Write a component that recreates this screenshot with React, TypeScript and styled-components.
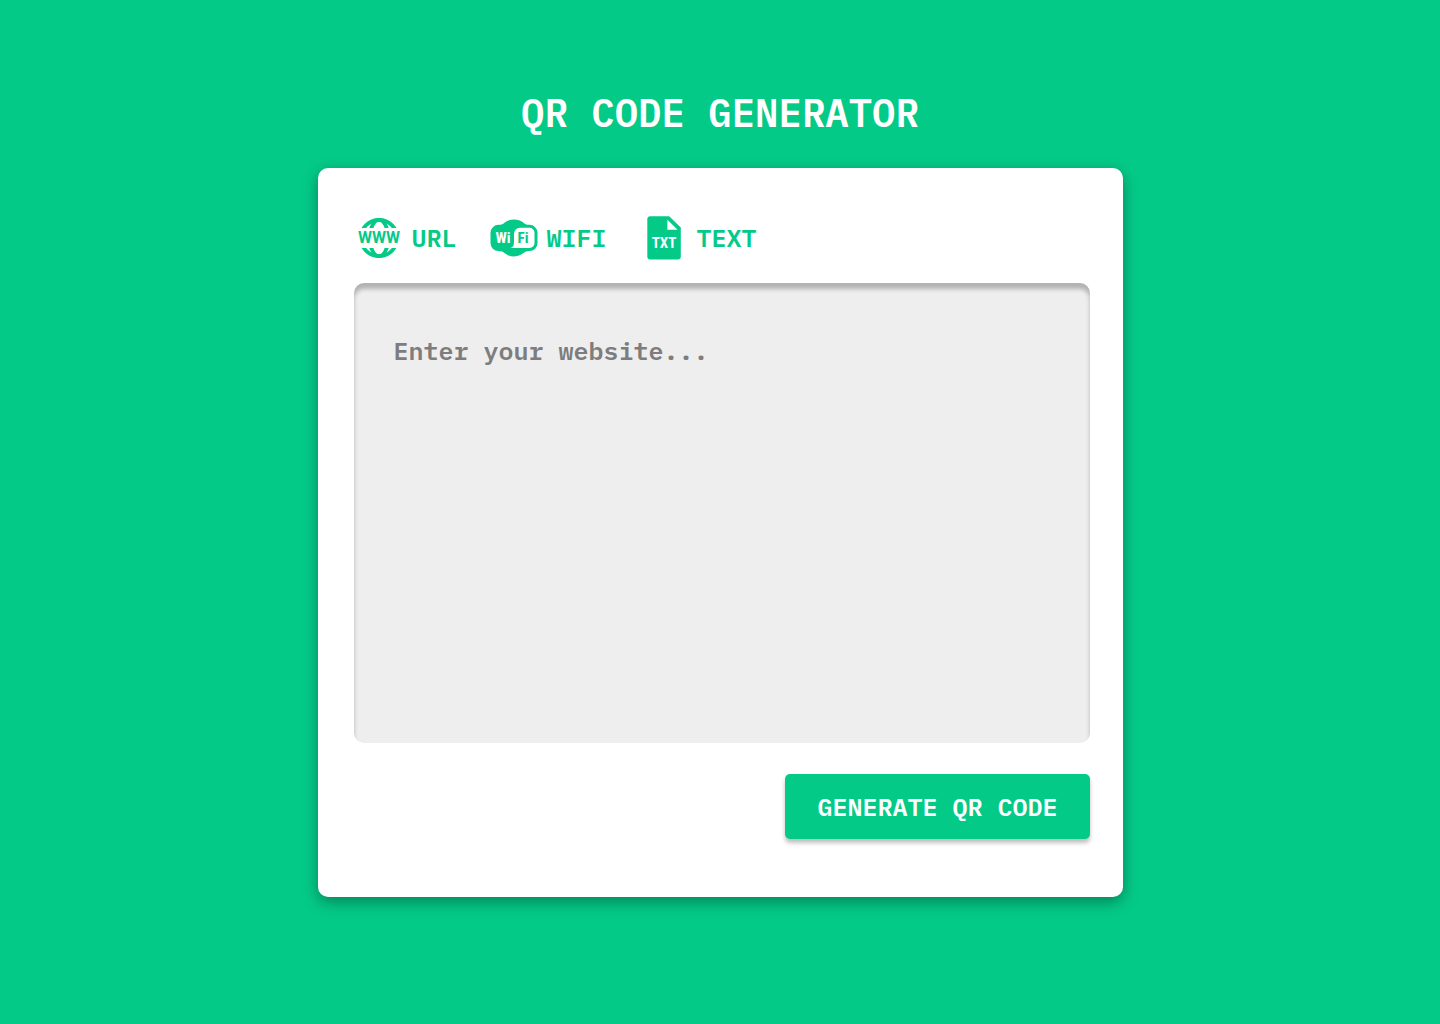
import React from "react";
import styled, { createGlobalStyle } from "styled-components";

const green = "#04ca88";
const mono = `"IBM Plex Mono", "Liberation Mono", monospace`;

const GlobalStyle = createGlobalStyle`
  *, *::before, *::after { box-sizing: border-box; }
  body {
    margin: 0;
    background: ${green};
    font-family: ${mono};
    font-weight: 600;
  }
`;

const Page = styled.main`
  min-height: 100vh;
  padding: 88px 24px;
  display: flex;
  flex-direction: column;
  align-items: center;
  gap: 30px;
`;

const Title = styled.h1`
  margin: 0;
  color: #fff;
  font-size: 39px;
  line-height: 50px;
  font-weight: 600;
  text-align: center;
`;

const Card = styled.form`
  width: 100%;
  max-width: 805px;
  padding: 45px 33px 58px 36px;
  display: flex;
  flex-direction: column;
  background: #fff;
  border-radius: 10px;
  box-shadow: 0 5px 15px rgba(0, 0, 0, 0.35);
`;

const Tabs = styled.nav`
  display: flex;
  flex-wrap: wrap;
  gap: 32px;
  margin-bottom: 20px;
`;

const Tab = styled.button`
  display: flex;
  align-items: center;
  gap: 8px;
  padding: 0;
  border: 0;
  background: none;
  color: ${green};
  font: 600 25px/50px ${mono};
  cursor: pointer;
`;

const Icon = styled.svg`
  width: 50px;
  height: 50px;
  flex: none;
`;

const IconText = styled.text<{ $size: number; $narrow?: boolean }>`
  font-family: ${(p) => (p.$narrow ? `"Roboto Condensed", Roboto` : "Roboto")}, sans-serif;
  font-size: ${(p) => p.$size}px;
  font-weight: 700;
  text-anchor: middle;
`;

const Entry = styled.textarea`
  display: block;
  width: 100%;
  height: 460px;
  padding: 51px 40px;
  border: 0;
  border-radius: 10px;
  outline: 0;
  resize: none;
  background: #eee;
  box-shadow: inset 0 6px 4px rgba(0, 0, 0, 0.25);
  color: #333;
  font: 600 25px/33px ${mono};

  &::placeholder {
    color: #7d7d7d;
    opacity: 1;
  }
`;

const Submit = styled.button`
  align-self: flex-end;
  margin-top: 31px;
  padding: 16px 32px;
  border: 0;
  border-radius: 5px;
  background: ${green};
  box-shadow: 0 4px 4px rgba(0, 0, 0, 0.25);
  color: #fff;
  font: 600 25px/33px ${mono};
  cursor: pointer;
`;

const UrlIcon = () => (
  <Icon viewBox="0 0 50 50" aria-hidden="true">
    <clipPath id="globe-caps">
      <path d="M0 0H50V15H0ZM0 35H50V50H0Z" />
    </clipPath>
    <g fill="none" stroke={green} strokeWidth="3.7" clipPath="url(#globe-caps)">
      <circle cx="25" cy="25" r="18.2" />
      <ellipse cx="25" cy="25" rx="9.2" ry="18.2" />
    </g>
    <IconText $size={16} x="25" y="30" fill={green}>WWW</IconText>
  </Icon>
);

const WifiIcon = () => (
  <Icon viewBox="0 0 50 50" aria-hidden="true">
    <path
      fill={green}
      d="M9.5 11.8C13 11.8 13.8 11 15.4 9.7A15.6 15.6 0 0 1 34.6 9.7C36.2 11 37 11.8 40.5 11.8A8 8 0 0 1 48.5 19.8V30A8 8 0 0 1 40.5 38C37 38 36.2 38.8 34.6 40.1A15.6 15.6 0 0 1 15.4 40.1C13.8 38.8 13 38 9.5 38A8 8 0 0 1 1.5 30V19.8A8 8 0 0 1 9.5 11.8Z"
    />
    <path
      fill="#fff"
      d="M31 14.8H40.5A5 5 0 0 1 45.5 19.8V30A5 5 0 0 1 40.5 35H21.5C24 34.3 25 32.5 25 29.5V20.8A6 6 0 0 1 31 14.8Z"
    />
    <IconText $size={15} $narrow x="14" y="30" fill="#fff">Wi</IconText>
    <IconText $size={15} $narrow x="34" y="30" fill={green}>Fi</IconText>
  </Icon>
);

const TextIcon = () => (
  <Icon viewBox="0 0 50 50" aria-hidden="true">
    <path
      fill={green}
      d="M11.3 3.3H30.2L41.8 14.6V43.6A3 3 0 0 1 38.8 46.6H11.3A3 3 0 0 1 8.3 43.6V6.3A3 3 0 0 1 11.3 3.3Z"
    />
    <path fill="#fff" d="M28.4 6.8L38.6 16.8H28.4Z" />
    <IconText $size={15} $narrow x="25" y="35" fill="#fff">TXT</IconText>
  </Icon>
);

export default function App() {
  return (
    <>
      <GlobalStyle />
      <Page>
        <Title>QR CODE GENERATOR</Title>
        <Card onSubmit={(e) => e.preventDefault()}>
          <Tabs aria-label="Content type">
            <Tab type="button"><UrlIcon />URL</Tab>
            <Tab type="button"><WifiIcon />WIFI</Tab>
            <Tab type="button"><TextIcon />TEXT</Tab>
          </Tabs>
          <Entry aria-label="Website" placeholder="Enter your website..." />
          <Submit type="submit">GENERATE QR CODE</Submit>
        </Card>
      </Page>
    </>
  );
}
